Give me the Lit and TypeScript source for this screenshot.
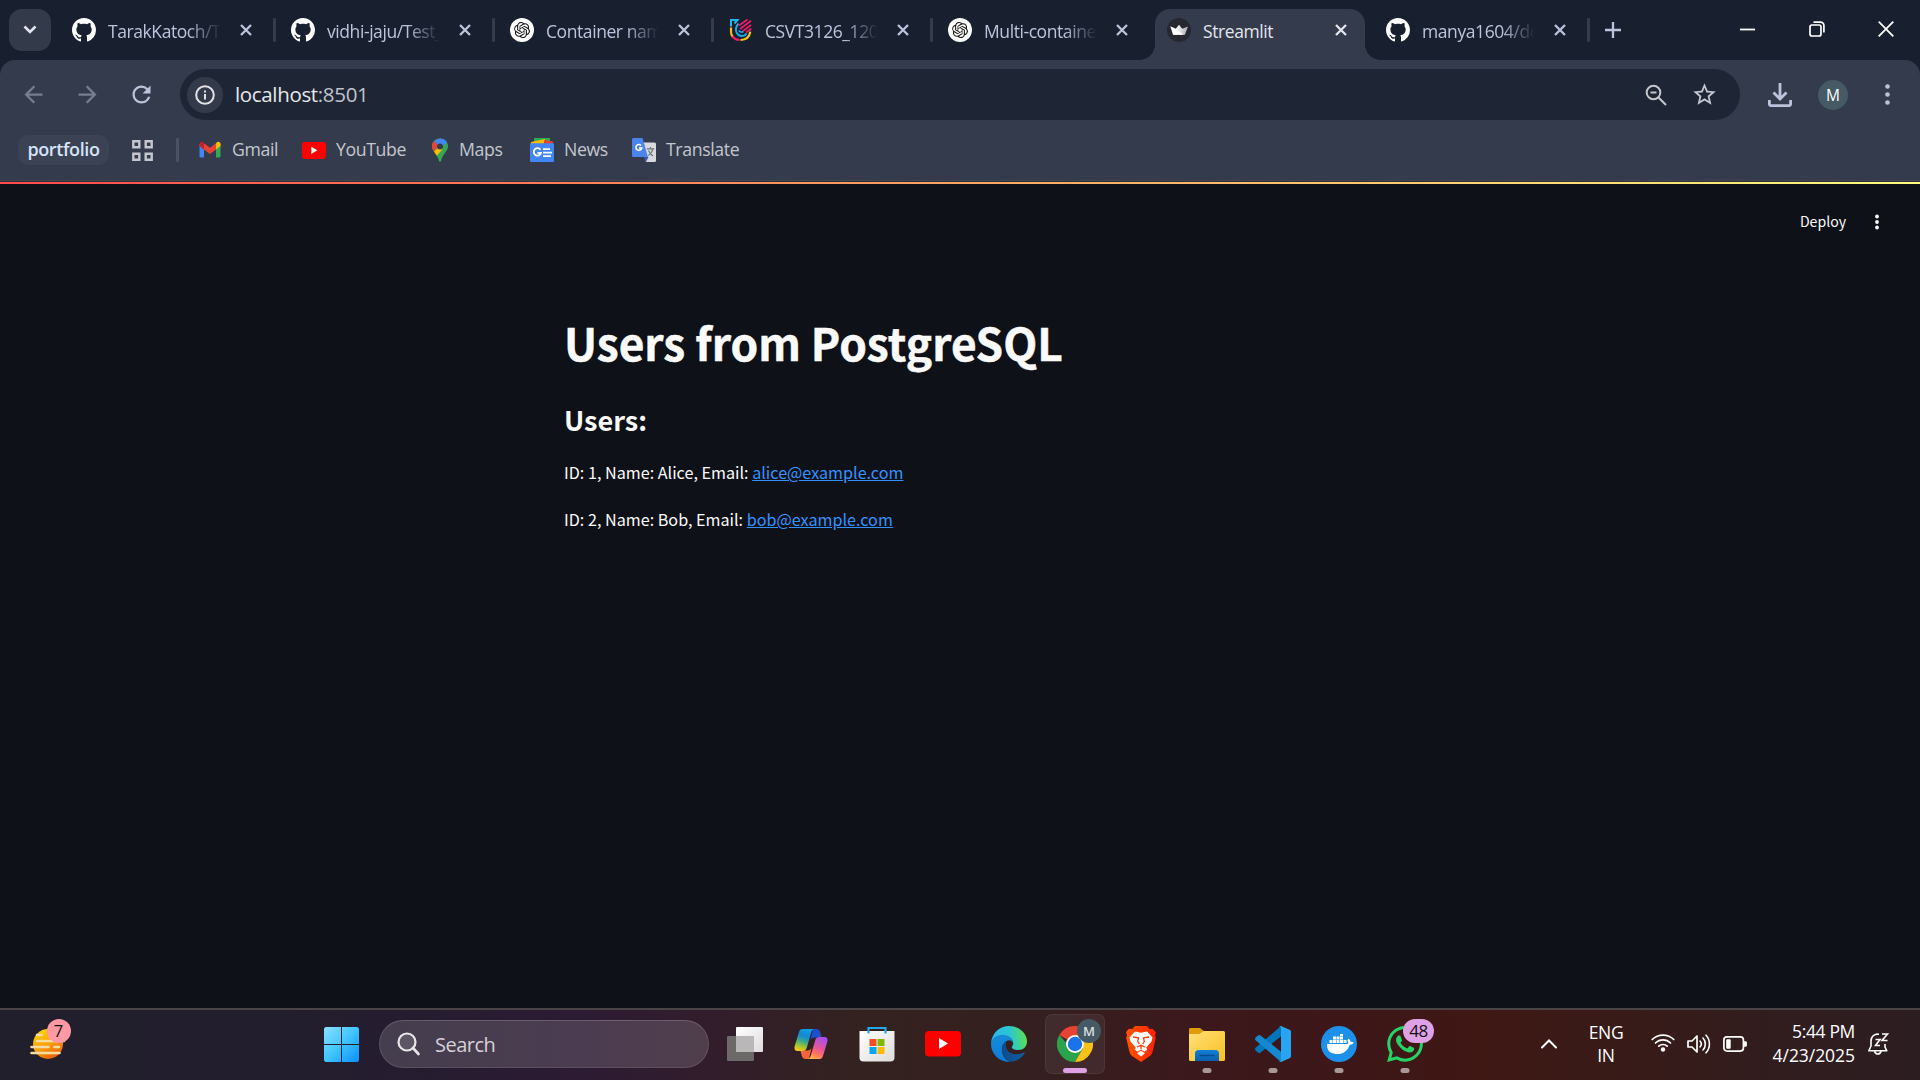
import { LitElement, html, css, svg, nothing } from "lit";
import { customElement, property } from "lit/decorators.js";
import { classMap } from "lit/directives/class-map.js";

const frame = (size: number, box: number, body: unknown, h = size, boxH = box) =>
  html`<svg width=${size} height=${h} viewBox="0 0 ${box} ${boxH}" fill="none">${body}</svg>`;

const github = frame(24, 16, svg`<path fill="#fff" d="M8 0C3.58 0 0 3.58 0 8c0 3.54 2.29 6.53 5.47 7.59.4.07.55-.17.55-.38 0-.19-.01-.82-.01-1.49-2.01.37-2.53-.49-2.69-.94-.09-.23-.48-.94-.82-1.13-.28-.15-.68-.52-.01-.53.63-.01 1.08.58 1.23.82.72 1.21 1.87.87 2.33.66.07-.52.28-.87.51-1.07-1.78-.2-3.64-.89-3.64-3.95 0-.87.31-1.59.82-2.15-.08-.2-.36-1.02.08-2.12 0 0 .67-.21 2.2.82.64-.18 1.32-.27 2-.27s1.36.09 2 .27c1.53-1.04 2.2-.82 2.2-.82.44 1.1.16 1.92.08 2.12.51.56.82 1.27.82 2.15 0 3.07-1.87 3.75-3.65 3.95.29.25.54.73.54 1.48 0 1.07-.01 1.93-.01 2.2 0 .21.15.46.55.38A8.01 8.01 0 0 0 16 8c0-4.42-3.58-8-8-8z"/>`);

const openai = frame(24, 36, svg`<circle cx="18" cy="18" r="18" fill="#fff"/><g transform="translate(6 6)"><path fill="#111" d="M22.2819 9.8211a5.9847 5.9847 0 0 0-.5157-4.9108 6.0462 6.0462 0 0 0-6.5098-2.9A6.0651 6.0651 0 0 0 4.9807 4.1818a5.9847 5.9847 0 0 0-3.9977 2.9 6.0462 6.0462 0 0 0 .7427 7.0966 5.98 5.98 0 0 0 .511 4.9107 6.051 6.051 0 0 0 6.5146 2.9001A5.9847 5.9847 0 0 0 13.2599 24a6.0557 6.0557 0 0 0 5.7718-4.2058 5.9894 5.9894 0 0 0 3.9977-2.9001 6.0557 6.0557 0 0 0-.7475-7.0729zm-9.022 12.6081a4.4755 4.4755 0 0 1-2.8764-1.0408l.1419-.0804 4.7783-2.7582a.7948.7948 0 0 0 .3927-.6813v-6.7369l2.02 1.1686a.071.071 0 0 1 .038.052v5.5826a4.504 4.504 0 0 1-4.4945 4.4944zm-9.6607-4.1254a4.4708 4.4708 0 0 1-.5346-3.0137l.142.0852 4.783 2.7582a.7712.7712 0 0 0 .7806 0l5.8428-3.3685v2.3324a.0804.0804 0 0 1-.0332.0615L9.74 19.9502a4.4992 4.4992 0 0 1-6.1408-1.6464zM2.3408 7.8956a4.485 4.485 0 0 1 2.3655-1.9728V11.6a.7664.7664 0 0 0 .3879.6765l5.8144 3.3543-2.0201 1.1685a.0757.0757 0 0 1-.071 0l-4.8303-2.7865A4.504 4.504 0 0 1 2.3408 7.872zm16.5963 3.8558L13.1038 8.364 15.1192 7.2a.0757.0757 0 0 1 .071 0l4.8303 2.7913a4.4944 4.4944 0 0 1-.6765 8.1042v-5.6772a.79.79 0 0 0-.407-.667zm2.0107-3.0231l-.142-.0852-4.7735-2.7818a.7759.7759 0 0 0-.7854 0L9.409 9.2297V6.8974a.0662.0662 0 0 1 .0284-.0615l4.8303-2.7866a4.4992 4.4992 0 0 1 6.6802 4.66zM8.3065 12.863l-2.02-1.1638a.0804.0804 0 0 1-.038-.0567V6.0742a4.4992 4.4992 0 0 1 7.3757-3.4537l-.142.0805L8.704 5.459a.7948.7948 0 0 0-.3927.6813zm1.0976-2.3654l2.602-1.4998 2.6069 1.4998v2.9994l-2.5974 1.4997-2.6067-1.4997Z"/></g>`);

const shield = frame(24, 24, svg`
  <path d="M2 8.500V2h6.500L5.500 5.500" stroke="#1fb6e8" stroke-width="2"/>
  <path d="M2 9.500v4.500c0 2 .7 3.600 1.800 4.900" stroke="#f9b916" stroke-width="2.200"/>
  <path d="M3.600 18.300c1.600 2.400 3.900 3.500 6.900 3.700" stroke="#ec1d64" stroke-width="2.200"/>
  <path d="M11.500 22c5-.2 9-3.200 9.800-8.400" stroke="#f9c916" stroke-width="2.200"/>
  <path d="M9.500 5.500C6.800 8.500 6.300 12 7.800 15c1 1.900 3 3 5 3 2 0 3.800-1 4.700-2.500" stroke="#1fa6e8" stroke-width="1.900"/>
  <path d="M9.800 12.500C11.300 14.300 13 14.300 14.500 13.500" stroke="#1fa6e8" stroke-width="1.700"/>
  <path d="M10 7.500 18.500 1.500M11 11l11-8.300M14 13l8-6M17 14.500l5.300-3.700" stroke="#ec1d64" stroke-width="1.700"/>`);

const crown = frame(24, 24, svg`
  <defs><linearGradient id="cr" x1="0" y1="0" x2="1" y2="0"><stop offset=".3" stop-color="#fff"/><stop offset=".7" stop-color="#d0d0d4"/><stop offset="1" stop-color="#a8a8ae"/></linearGradient></defs>
  <circle cx="12" cy="12" r="12" fill="#262730"/>
  <path d="M3.300 8.300 8.800 10.800 12 6.800l3.300 4 5.700-2.300-3.100 8.200H6z" fill="url(#cr)"/><path d="m6 16.700 4-4.400 6.500 4.400z" fill="#fff"/>`);

const cross = frame(12, 12, svg`<path d="m1 1 10 10M11 1 1 11" stroke="currentColor" stroke-width="2.300"/>`);

type TabInfo = { icon: unknown; title: string; active?: boolean; bare?: boolean };
const tabs: TabInfo[] = [
  { icon: github, title: "TarakKatoch/Te" },
  { icon: github, title: "vidhi-jaju/Test_" },
  { icon: openai, title: "Container nam" },
  { icon: shield, title: "CSVT3126_120" },
  { icon: openai, title: "Multi-containe", bare: true },
  { icon: crown, title: "Streamlit", active: true, bare: true },
  { icon: github, title: "manya1604/do" },
];

const youtube = (w: number, h: number) => frame(w, 36, svg`<rect width="36" height="25.500" rx="4" fill="#f00"/><path d="M14 7v11l9-5.500z" fill="#fff"/>`, h, 25.5);

const gmail = frame(24, 24, svg`
  <path d="M1.500 6v12.300c0 .7.500 1.200 1.200 1.200H6V9z" fill="#4285f4"/><path d="M18 9v10.500h3.300c.7 0 1.200-.5 1.200-1.200V6z" fill="#34a853"/>
  <path d="M18 5.300v6.200l4.500-3.400V6c0-2.200-2.200-2.900-3.700-1.800z" fill="#fbbc04"/><path d="M6 11.500V5.300l6 4.500 6-4.500v6.200L12 16z" fill="#ea4335"/>
  <path d="M1.500 6v2.100L6 11.500V5.300l-.8-.8C3.700 3.200 1.500 4 1.500 6z" fill="#c5221f"/>`);

const maps = frame(18, 18, svg`
  <defs><clipPath id="pin"><path d="M9 .5C4.500.5 1 3.800 1 8.200 1 13 5.500 15 7.600 21.500 8 23 8.300 24 9 24s1-1 1.400-2.500C12.500 15 17 13 17 8.200 17 3.800 13.500.5 9 .5z"/></clipPath></defs>
  <g clip-path="url(#pin)"><path d="M0 0h18v24H0z" fill="#34a853"/><path d="M2 14.500 9 8l2.500 3.200L5.500 18H0v-8z" fill="#fbbc04"/><path d="M3 3.500 8 0h6l2.500 4L9 10.500z" fill="#4285f4"/><path d="m3 3.200 5 4.300-5.500 6.300H0V4z" fill="#ea4335"/></g>
  <circle cx="9" cy="8.400" r="3" fill="#343b4c"/>`, 24, 24);

const news = frame(24, 24, svg`
  <path d="M4 0h16v6H4z" fill="#34a853"/><path d="m1 4 14-3v5H1z" fill="#fbbc04"/><path d="m14 2 9 1.500V6h-9z" fill="#ea4335"/>
  <rect y="5.300" width="24" height="18.700" rx="1" fill="#4285f4"/><path d="M10.500 11.800A3.700 3.700 0 1 0 11 15H7.500" stroke="#fff" stroke-width="1.800"/><path d="M13 11.200h7M13 14.700h9M13 18.200h8" stroke="#fff" stroke-width="1.800"/>`);

const translate = frame(24, 24, svg`
  <path d="M9 4.500h13.500A1.500 1.500 0 0 1 24 6v16.500a1.500 1.500 0 0 1-1.500 1.500H14z" fill="#d8dadd"/><path d="M12.500 19h4l-2.500 5z" fill="#3c50d0"/>
  <path d="M1.500 0h9l5.500 19H1.500A1.500 1.500 0 0 1 0 17.500v-16A1.500 1.500 0 0 1 1.500 0z" fill="#4c84ee"/>
  <path d="M9 7.500A2.900 2.900 0 1 0 9.700 10H7" stroke="#fff" stroke-width="1.600"/><path d="M14.800 10.800h7.500M18.500 9v2M20.800 11c-.6 3-2.500 5.300-4.500 6.500M16.500 12.500c1 2.500 2.500 4 4.500 5.500" stroke="#70777d" stroke-width="1.200"/>`);

const weather = frame(36, 36, svg`
  <defs><linearGradient id="sun" x1=".2" y1="0" x2=".7" y2="1"><stop stop-color="#ffd400"/><stop offset=".55" stop-color="#f99d0a"/><stop offset="1" stop-color="#e8590c"/></linearGradient></defs>
  <circle cx="18" cy="18" r="15" fill="url(#sun)"/>
  <path d="M7 9h5M7 15h27M1.500 21h17M24.500 21h4.500M1.500 27h28" stroke="#f5dca0" stroke-width="2.600" stroke-linecap="round"/>`);

const windows = frame(35, 35, svg`
  <defs><linearGradient id="wn" x1="0" y1="0" x2="35" y2="35" gradientUnits="userSpaceOnUse"><stop stop-color="#8ae1ff"/><stop offset=".5" stop-color="#40c4ff"/><stop offset="1" stop-color="#0a90ff"/></linearGradient></defs>
  <path fill="url(#wn)" d="M1.500 0H17v17H0V1.500zM18 0h15.500L35 1.500V17H18zM0 18h17v17H1.500L0 33.500zM18 18h17v15.500L33.500 35H18z"/>`);

const taskView = frame(36, 36, svg`
  <defs><linearGradient id="tv" x1="0" y1="0" x2="1" y2="1"><stop stop-color="#fff"/><stop offset="1" stop-color="#ddd"/></linearGradient></defs>
  <rect x="9" y="1" width="27" height="25" rx="1" fill="url(#tv)"/><rect y="10" width="27" height="25" rx="1" fill="#6c6a69"/><path d="M9 10h18v16H9z" fill="#b9b7b7"/>`);

const copilot = frame(36, 36, svg`
  <defs>
    <linearGradient id="c1" x1=".6" y1="0" x2=".3" y2="1"><stop stop-color="#159ce4"/><stop offset=".3" stop-color="#1387d8"/><stop offset=".55" stop-color="#37a98c"/><stop offset=".8" stop-color="#a4c533"/><stop offset="1" stop-color="#f9c915"/></linearGradient>
    <linearGradient id="c2" x1=".7" y1="0" x2=".3" y2="1"><stop stop-color="#a54ff0"/><stop offset=".45" stop-color="#e0559f"/><stop offset=".75" stop-color="#fb7164"/><stop offset="1" stop-color="#ffaf45"/></linearGradient>
  </defs>
  <path d="M20 3h3.500c2 0 3 1 3.600 3l1.600 5.500H22c-2.500 0-4 1-4.600 3z" fill="#1c4fcb"/>
  <path d="M16 33h-3.500c-2 0-3-1-3.600-3l-1.600-5.500H14c2.500 0 4-1 4.600-3z" fill="#f6643c"/>
  <path d="M9.500 3H21c-1.500.5-2.300 1.800-2.800 3.500L13.700 22c-.6 2-2 3-4 3H4.500C2 25 1 23 1.600 20.500L6 6c.6-2 1.700-3 3.500-3z" fill="url(#c1)"/>
  <path d="M26.500 33H15c1.500-.5 2.300-1.800 2.800-3.500L22.300 14c.6-2 2-3 4-3h5.200c2.500 0 3.500 2 2.900 4.500L30 30c-.6 2-1.700 3-3.500 3z" fill="url(#c2)"/>`);

const store = frame(36, 36, svg`
  <defs><linearGradient id="st" x1="0" y1="0" x2="1" y2="1"><stop stop-color="#fff"/><stop offset="1" stop-color="#dcdcdc"/></linearGradient></defs>
  <path d="M.5 5h35v26.500a4 4 0 0 1-4 4h-27a4 4 0 0 1-4-4z" fill="url(#st)"/><path d="M9.500 7.500v-5.500h17v5.500" stroke="#23a6ea" stroke-width="2.200"/>
  <path d="M10.500 13h7v7h-7z" fill="#f04e23"/><path d="M18.500 13h7v7h-7z" fill="#7fba00"/><path d="M10.500 21h7v7h-7z" fill="#05a6f0"/><path d="M18.500 21h7v7h-7z" fill="#ffba08"/>`);

const edge = frame(36, 36, svg`
  <defs>
    <linearGradient id="e1" x1="0" y1=".5" x2="1" y2=".4"><stop stop-color="#29b8ee"/><stop offset=".55" stop-color="#2bc7cf"/><stop offset="1" stop-color="#5fe04b"/></linearGradient>
    <linearGradient id="e2" x1=".3" y1="0" x2=".4" y2="1"><stop stop-color="#168dd6"/><stop offset="1" stop-color="#0c7ad8"/></linearGradient>
    <linearGradient id="e3" x1="0" y1="0" x2="1" y2="0"><stop stop-color="#114a8b"/><stop offset="1" stop-color="#0c5da5"/></linearGradient>
  </defs>
  <path d="M0 17C1 7 8.500 0 18 0c10.500 0 18 7.500 18 15.500 0 5-3.700 8.500-8.700 8.500-3.800 0-6.500-1.400-6.500-2.800 0-1 1.400-1.700 1.400-4C22.200 13 18 9.500 12 9.500 6 9.500 1.500 12.500 0 17z" fill="url(#e1)"/>
  <path d="M0 18c.3-5.500 5.500-9.200 11.500-9.200 6 0 10.700 3.700 10.700 8.200-1.200-2-2.700-2.800-4.700-2.600-4 .6-7 5-6.500 10.600.5 5 3.500 9 8 10.900C9 36.500 0 28.500 0 18z" fill="url(#e2)"/>
  <path d="M15 15.500c-3.500 2-5 6-3.800 10.500C12.600 32 17 36 21.500 35.600c5.500-1 9.700-4.300 12.200-8.300.3-.7-.2-1-.8-.7-8 3.800-17 1-17.900-6.200-.2-1.900 0-3.500 0-4.900z" fill="url(#e3)"/>`);

const chrome = frame(36, 36, svg`
  <path d="M18 18 2.410 9A18 18 0 0 1 33.590 9H18z" fill="#e94235"/><path d="M18 18h-7.800L2.410 9A18 18 0 0 0 18 36l7.800-13.500z" fill="#2ba24c"/>
  <path d="M18 9h15.590A18 18 0 0 1 18 36l7.800-13.500z" fill="#fbc116"/><circle cx="18" cy="18" r="9" fill="#fff"/><circle cx="18" cy="18" r="7.200" fill="#1a73e8"/>`);

const brave = frame(30, 30, svg`
  <defs><linearGradient id="br" x1="0" y1="0" x2="1" y2="0"><stop stop-color="#ff5500"/><stop offset="1" stop-color="#ff2000"/></linearGradient></defs>
  <path d="m9 0h12l2.700 3 2.600-.3L30 6.200l-1 3 .8 2.500L26.500 26c-.5 2-1.500 3.300-3 4.300L15 36l-8.500-5.700c-1.500-1-2.500-2.300-3-4.300L.2 11.700 1 9.200l-1-3 2.700-3.500L6.300 3z" fill="url(#br)"/>
  <path d="m9 5.500 6 1.300 6-1.300 5.500 6-1 4-5.200 6 .9 2.300-2.700 2L15 23.500l-3.500 2.300-2.700-2 .9-2.300-5.200-6-1-4z" fill="#fff"/>
  <path d="M15 24.800 19 27.300 15 30.500l-4-3.200z" fill="#fff"/>
  <path d="m7 11 5.500.8-.8 3.700 1.600 2.500M23 11l-5.500.8.8 3.700-1.600 2.500M11 21l4-1.800 4 1.800M15 19v4" stroke="#ff3a08" stroke-width="1.300"/>`, 36, 36);

const folder = frame(36, 36, svg`
  <defs><linearGradient id="fd" x1="0" y1="0" x2="1" y2="1"><stop stop-color="#ffe07c"/><stop offset="1" stop-color="#fbbf1d"/></linearGradient><linearGradient id="fb" x1="0" y1="0" x2="0" y2="1"><stop stop-color="#1280d6"/><stop offset="1" stop-color="#0a5fb0"/></linearGradient></defs>
  <path d="M0 3.500C0 2.500.8 2 1.800 2H11l5 4v4H0z" fill="#e09d05"/><path d="M0 8h10.500l4-3H34.500A1.500 1.500 0 0 1 36 6.500v27a1.500 1.500 0 0 1-1.500 1.500h-33A1.500 1.500 0 0 1 0 33.500z" fill="url(#fd)"/>
  <path d="M6 35v-7.500a3.500 3.500 0 0 1 3.500-3.500h17a3.500 3.500 0 0 1 3.500 3.500V35z" fill="url(#fb)"/><path d="M11 29.500h14" stroke="#084a8c" stroke-width="1.400" stroke-linecap="round"/>`);

const vscode = frame(36, 36, svg`
  <path d="M26 0v10.300L5.500 26.600c-.8.700-1.800.7-2.600 0L.6 24.400c-.8-.8-.8-1.900 0-2.700z" fill="#0076bd"/>
  <path d="M26 36V25.700L5.500 9.400c-.8-.7-1.800-.7-2.600 0L.6 11.600c-.8.800-.8 1.900 0 2.700z" fill="#1489d2"/>
  <path d="M26 0l8.600 3.700c.9.400 1.400 1.200 1.400 2.200v24.200c0 1-.5 1.800-1.400 2.200L26 36c-.8.200-1.500 0-2-.6 1 .4 2-.3 2-1.500V2.100c0-1.200-1-1.900-2-1.500.5-.6 1.200-.8 2-.6z" fill="#27a4f2"/>`);

const docker = frame(36, 36, svg`
  <circle cx="18" cy="18" r="18" fill="#1d91ea"/>
  <path d="M6 18h20.500c.8-.3 1-1 .5-2-.6-1.200-.4-2.300.4-3.300 1.300.7 2 1.700 2 3 1.200-.2 2.300 0 3.300.8-.7 1.600-2 2.200-4 2.200C26.900 24.500 22.500 28 16 28c-6 0-10.300-3-10-10z" fill="#fff"/>
  <path d="M8.500 14h3v3h-3zM12 14h3v3h-3zM15.500 14h3v3h-3zM19 14h3v3h-3zM22.500 14h3v3h-3zM12 10.500h3v3h-3zM15.500 10.500h3v3h-3zM19 10.500h3v3h-3zM19 8h3v2h-3z" fill="#fff"/>`);

const whatsapp = frame(36, 24, svg`<path fill="#25d366" d="M17.472 14.382c-.297-.149-1.758-.867-2.03-.967-.273-.099-.471-.148-.67.15-.197.297-.767.966-.94 1.164-.173.199-.347.223-.644.075-.297-.15-1.255-.463-2.39-1.475-.883-.788-1.48-1.761-1.653-2.059-.173-.297-.018-.458.13-.606.134-.133.298-.347.446-.52.149-.174.198-.298.298-.497.099-.198.05-.371-.025-.52-.075-.149-.669-1.612-.916-2.207-.242-.579-.487-.5-.669-.51-.173-.008-.371-.01-.57-.01-.198 0-.52.074-.792.372-.272.297-1.04 1.016-1.04 2.479 0 1.462 1.065 2.875 1.213 3.074.149.198 2.096 3.2 5.077 4.487.709.306 1.262.489 1.694.625.712.227 1.36.195 1.871.118.571-.085 1.758-.719 2.006-1.413.248-.694.248-1.289.173-1.413-.074-.124-.272-.198-.57-.347m-5.421 7.403h-.004a9.87 9.87 0 01-5.031-1.378l-.361-.214-3.741.982.998-3.648-.235-.374a9.86 9.86 0 01-1.51-5.26c.001-5.45 4.436-9.884 9.888-9.884 2.64 0 5.122 1.03 6.988 2.898a9.825 9.825 0 012.893 6.994c-.003 5.45-4.437 9.884-9.885 9.884m8.413-18.297A11.815 11.815 0 0012.05 0C5.495 0 .16 5.335.157 11.892c0 2.096.547 4.142 1.588 5.945L.057 24l6.305-1.654a11.882 11.882 0 005.683 1.448h.005c6.554 0 11.89-5.335 11.893-11.893a11.821 11.821 0 00-3.48-8.413z"/>`);

@customElement("browser-tab")
class BrowserTab extends LitElement {
  @property({ attribute: false }) info!: TabInfo;
  static styles = css`
    :host { display: flex; width: 219px; height: 51px; flex: none; }
    svg { display: block; }
    .tab { box-sizing: border-box; width: 210px; height: 51px; padding: 9px 12px 18px; display: flex; align-items: center; color: #bcc3dc; position: relative; }
    .title { width: 114px; margin-left: 12px; white-space: nowrap; font: 17.5px/26px "Open Sans", "Noto Sans", sans-serif; letter-spacing: -0.42px; padding-top: 1px; mask-image: linear-gradient(90deg, #000 70%, transparent 99%); }
    .close { margin-left: 18px; width: 12px; }
    .active { background: #343b4c; border-radius: 15px 15px 0 0; color: #e3e5ec; }
    .active .title { mask-image: none; width: 130px; }
    .active .close { margin-left: 2px; }
    .active::before, .active::after { content: ""; position: absolute; bottom: 0; width: 15px; height: 15px; }
    .active::before { left: -15px; background: radial-gradient(circle at 0 0, transparent 14.5px, #343b4c 15px); }
    .active::after { right: -15px; background: radial-gradient(circle at 100% 0, transparent 14.5px, #343b4c 15px); }
    .sep { width: 3px; height: 24px; margin: 9px 3px 0; background: #333c4c; border-radius: 1px; }
  `;
  render() {
    const { icon, title, active, bare } = this.info;
    return html`<div class=${classMap({ tab: true, active: !!active })}>${icon}<div class="title">${title}</div><div class="close">${cross}</div></div>
      ${bare ? nothing : html`<div class="sep"></div>`}`;
  }
}

@customElement("task-icon")
class TaskIcon extends LitElement {
  @property({ attribute: false }) icon: unknown;
  @property() state = "";
  @property() badge = "";
  static styles = css`
    :host { display: flex; width: 66px; height: 70px; justify-content: center; align-items: center; flex: none; }
    svg { display: block; }
    .cell { box-sizing: border-box; width: 60px; height: 60px; margin-bottom: 2px; border-radius: 7px; border: 1px solid transparent; position: relative; display: flex; align-items: center; justify-content: center; }
    .active { background: rgba(255, 255, 255, 0.06); border-color: rgba(255, 255, 255, 0.06); }
    .mark { position: absolute; bottom: 0; left: 50%; transform: translateX(-50%); width: 9px; height: 5px; border-radius: 2.500px; background: #a89898; }
    .active .mark { width: 24px; background: #dfa1e6; }
    .badge { position: absolute; height: 24px; top: 4px; border-radius: 12px; display: flex; align-items: center; justify-content: center; font: 17px/24px "Open Sans", sans-serif; }
    .count { left: 27px; width: 31px; background: #dfa1e6; color: #101010; letter-spacing: -0.500px; }
    .person { left: 31px; width: 24px; background: #455a64; color: #d9dfe1; font-size: 13px; font-weight: 600; }
  `;
  render() {
    return html`<div class=${classMap({ cell: true, active: this.state === "active" })}>${this.icon}
      ${this.badge ? html`<div class="badge ${this.state === "active" ? "person" : "count"}">${this.badge}</div>` : nothing}
      ${this.state ? html`<div class="mark"></div>` : nothing}</div>`;
  }
}

@customElement("app-root")
class AppRoot extends LitElement {
  static styles = css`
    :host { display: block; width: 1920px; height: 1080px; overflow: hidden; background: #0e1117; font-family: "Open Sans", "Noto Sans", sans-serif; }
    svg { display: block; flex: none; }
    .page { display: flex; flex-direction: column; height: 1080px; }
    .strip { height: 51px; padding: 9px 0 0 9px; background: #182030; display: flex; flex: none; }
    .menu { width: 42px; height: 42px; border-radius: 13px; background: #333b4b; display: flex; align-items: center; justify-content: center; margin-right: 9px; }
    .new { width: 24px; height: 42px; display: flex; align-items: center; justify-content: center; margin-left: 8px; color: #bcc3dc; }
    .window { margin-left: auto; display: flex; height: 40px; align-items: center; }
    .window > div { width: 69px; display: flex; justify-content: center; }
    .chrome { background: #182030; flex: none; height: 120px; }
    .bars { background: #343b4c; height: 120px; border-radius: 15px 15px 0 0; }
    .tools { display: flex; align-items: center; height: 51px; padding-top: 9px; }
    .nav { width: 54px; display: flex; justify-content: center; color: #777e8f; }
    .nav:first-child { margin-left: 6px; }
    .nav.live { color: #bcc3dc; }
    .address { margin-left: 12px; width: 1560px; height: 51px; border-radius: 25.500px; background: #1e2636; display: flex; align-items: center; box-sizing: border-box; padding: 0 22px 0 7px; }
    .info { width: 36px; height: 36px; border-radius: 50%; background: #333b4b; display: flex; align-items: center; justify-content: center; }
    .url { margin: 0 0 2px 12px; font-size: 20.500px; line-height: 28px; letter-spacing: -0.340px; color: #e6e7ea; flex: 1; }
    .port { color: #c0c3ca; }
    .zoom { margin-right: 24px; }
    .down { margin-left: 28px; }
    .avatar { margin-left: 26px; width: 30px; height: 30px; border-radius: 50%; background: #455a64; color: #fff; font: 500 15.500px/31px "Open Sans", sans-serif; text-align: center; }
    .more { margin-left: 37px; }
    .marks { display: flex; align-items: center; height: 60px; font-size: 17.700px; letter-spacing: -0.380px; color: #c4c7ce; }
    .chip { margin-left: 18px; width: 91px; height: 30px; border-radius: 10px; background: #3b4253; color: #d5e4fb; font-weight: 600; font-size: 18px; line-height: 29px; text-align: center; }
    .apps { margin: 0 23px 0 23px; }
    .rule { width: 3px; height: 24px; background: #4a5263; border-radius: 1px; margin-right: 19px; }
    .mark { display: flex; align-items: center; gap: 10px; line-height: 26px; flex: none; }
    .mark span { margin-bottom: 2px; }
    .edge { height: 1px; background: #42434b; }
    .seam { height: 1px; background: #2b303d; }
    .glow { height: 2px; background: linear-gradient(90deg, #ff4b4b, #fffd80); flex: none; }
    .seams { flex: none; }
    .app { flex: 1; font-family: "Noto Sans CJK SC", sans-serif; color: #fafafa; min-height: 0; }
    .head { display: flex; justify-content: flex-end; align-items: center; height: 76px; padding-right: 38px; font-size: 14.100px; }
    .head span { margin-bottom: 2px; }
    .head svg { margin-left: 26px; }
    .body { padding-left: 564px; }
    h1 { margin: 47px 0 0; font-size: 44.250px; line-height: 70px; font-weight: 700; white-space: nowrap; -webkit-text-stroke: 0.500px #fafafa; }
    h2 { margin: 22px 0 0; font-size: 27.100px; line-height: 42px; font-weight: 700; }
    p { margin: 16px 0 0; font-size: 16.150px; line-height: 31px; }
    a { color: #3391ff; text-decoration: underline; }
    .taskbar { flex: none; height: 70px; border-top: 2px solid #4b4447; display: flex; align-items: center; color: #fff; background: linear-gradient(90deg, #221f2d 0, #221e2d 280px, #261c30 430px, #2d1b33 590px, #321d2b 720px, #33221f 860px, #351f20 1040px, #3c181c 1200px, #3d1718 1350px, #3f1814 1480px, #381b18 1620px, #301d1f 1800px, #2c1d21 1920px); }
    .weather { width: 36px; position: relative; margin: 0 258px 2px 30px; }
    .weather span { position: absolute; left: 16.500px; top: -7px; width: 24px; height: 24px; border-radius: 50%; background: #ff99a4; color: #111; font-size: 16.500px; line-height: 24px; text-align: center; }
    .start { margin-bottom: 1px; }
    .search { margin: 0 3px 2px 20px; width: 330px; height: 48px; box-sizing: border-box; border-radius: 24px; background: rgba(255, 255, 255, 0.15); border: 1px solid rgba(255, 255, 255, 0.1); border-top-color: rgba(255, 255, 255, 0.16); display: flex; align-items: center; padding-left: 17px; gap: 14px; font-size: 20px; letter-spacing: -0.500px; color: #d6d1d8; }
    .tray { margin-left: auto; display: flex; align-items: center; font-size: 17.500px; line-height: 24px; height: 68px; margin-bottom: 2px; }
    .lang { margin: 0 27px 0 31px; width: 36px; text-align: center; letter-spacing: -0.350px; line-height: 23px; white-space: nowrap; }
    .status { display: flex; gap: 12px; align-items: center; }
    .clock { text-align: right; width: 100px; margin: 0 12px 2px 8px; letter-spacing: -0.050px; white-space: nowrap; }
    .clock span { letter-spacing: -0.350px; }
    .bell { margin-right: 30px; }
  `;

  render() {
    const apps: [unknown, string, string][] = [
      [taskView, "", ""], [copilot, "", ""], [store, "", ""], [youtube(36, 25.5), "", ""], [edge, "", ""], [chrome, "active", "M"],
      [brave, "", ""], [folder, "open", ""], [vscode, "open", ""], [docker, "open", ""], [whatsapp, "open", "48"],
    ];
    const marks: [unknown, string, number][] = [[gmail, "Gmail", 104], [youtube(24, 17), "YouTube", 129], [maps, "Maps", 99], [news, "News", 102], [translate, "Translate", 110]];
    const users = [{ id: 1, name: "Alice", email: "alice@example.com" }, { id: 2, name: "Bob", email: "bob@example.com" }];
    return html`<div class="page">
      <div class="strip">
        <div class="menu">${frame(14, 14, svg`<path d="m1.500 3.500 5.500 5.500 5.500-5.500" stroke="#e3e6ee" stroke-width="2.600"/>`)}</div>
        ${tabs.map((t) => html`<browser-tab .info=${t}></browser-tab>`)}
        <div class="new">${frame(16, 16, svg`<path d="M8 0v16M0 8h16" stroke="currentColor" stroke-width="2.300"/>`)}</div>
        <div class="window">
          <div>${frame(15, 15, svg`<path d="M0 7.500h15" stroke="#fff" stroke-width="1.800"/>`)}</div>
          <div>${frame(16, 16, svg`<rect x="1" y="4" width="11" height="11" rx="2" stroke="#fff" stroke-width="1.700"/><path d="M4.500 1.200h7a3.400 3.400 0 0 1 3.400 3.400v7" stroke="#fff" stroke-width="1.700"/>`)}</div>
          <div>${frame(16, 16, svg`<path d="m.7.7 14.600 14.600M15.300.7.7 15.300" stroke="#fff" stroke-width="1.800"/>`)}</div>
        </div>
      </div>
      <div class="chrome"><div class="bars">
        <div class="tools">
          <div class="nav">${frame(27, 24, svg`<path fill="currentColor" d="M20 11H7.830l5.590-5.590L12 4l-8 8 8 8 1.410-1.410L7.830 13H20v-2z"/>`)}</div>
          <div class="nav">${frame(27, 24, svg`<path fill="currentColor" d="M4 11h12.170l-5.590-5.590L12 4l8 8-8 8-1.410-1.410L16.170 13H4v-2z"/>`)}</div>
          <div class="nav live">${frame(27, 24, svg`<path fill="currentColor" d="M17.650 6.350A7.958 7.958 0 0 0 12 4c-4.420 0-7.990 3.580-7.990 8s3.570 8 7.990 8c3.730 0 6.840-2.550 7.730-6h-2.080A5.990 5.990 0 0 1 12 18c-3.310 0-6-2.690-6-6s2.690-6 6-6c1.660 0 3.140.69 4.220 1.780L13 11h7V4l-2.350 2.350z"/>`)}</div>
          <div class="address">
            <div class="info">${frame(20, 20, svg`<circle cx="10" cy="10" r="8.800" stroke="#e3e3e3" stroke-width="2"/><path d="M10 9v5.500M10 5.400v2" stroke="#e3e3e3" stroke-width="2"/>`)}</div>
            <div class="url">localhost<span class="port">:8501</span></div>
            <div class="zoom">${frame(22, 22, svg`<circle cx="8.500" cy="8.500" r="6.800" stroke="#c4c6cb" stroke-width="2"/><path d="m13.500 13.500 7.500 7.500M5.500 8.500h6" stroke="#c4c6cb" stroke-width="2"/>`)}</div>
            ${frame(27, 24, svg`<path fill="#c4c6cb" d="m22 9.240-7.190-.62L12 2 9.190 8.630 2 9.240l5.460 4.730L5.820 21 12 17.270 18.180 21l-1.630-7.030L22 9.240zM12 15.400l-3.760 2.270 1-4.280-3.320-2.880 4.380-.38L12 6.100l1.710 4.040 4.380.38-3.320 2.880 1 4.280L12 15.400z"/>`)}
          </div>
          <div class="down">${frame(24, 24, svg`<path d="M12 0v15M5.500 9.500 12 16l6.500-6.500" stroke="#bcc3dc" stroke-width="2.800"/><path d="M1.400 17v4.500a1.200 1.200 0 0 0 1.200 1.100h18.800a1.200 1.200 0 0 0 1.200-1.100V17" stroke="#bcc3dc" stroke-width="2.800"/>`)}</div>
          <div class="avatar">M</div>
          <div class="more">${frame(5, 5, svg`<circle cx="2.500" cy="2.500" r="2.300" fill="#bcc3dc"/><circle cx="2.500" cy="10.500" r="2.300" fill="#bcc3dc"/><circle cx="2.500" cy="18.500" r="2.300" fill="#bcc3dc"/>`, 21, 21)}</div>
        </div>
        <div class="marks">
          <div class="chip">portfolio</div>
          <div class="apps">${frame(21, 21, svg`<path d="M1.300 1.300h6v6h-6zM13.700 1.300h6v6h-6zM1.300 13.700h6v6h-6zM13.700 13.700h6v6h-6z" stroke="#c4c7ce" stroke-width="2.400"/>`)}</div>
          <div class="rule"></div>
          ${marks.map(([icon, name, width]) => html`<div class="mark" style="width:${width}px">${icon}<span>${name}</span></div>`)}
        </div>
      </div></div>
      <div class="seams"><div class="edge"></div><div class="seam"></div></div>
      <div class="glow"></div>
      <div class="app">
        <div class="head"><span>Deploy</span> ${frame(10, 10, svg`<circle cx="5" cy="2.500" r="1.900" fill="#fafafa"/><circle cx="5" cy="8" r="1.900" fill="#fafafa"/><circle cx="5" cy="13.500" r="1.900" fill="#fafafa"/>`, 16, 16)}</div>
        <div class="body">
          <h1>Users from PostgreSQL</h1>
          <h2>Users:</h2>
          ${users.map((u) => html`<p>ID: ${u.id}, Name: ${u.name}, Email: <a>${u.email}</a></p>`)}
        </div>
      </div>
      <div class="taskbar">
        <div class="weather">${weather}<span>7</span></div>
        <div class="start">${windows}</div>
        <div class="search">${frame(24, 24, svg`<circle cx="10" cy="10" r="8.500" fill="#ffffff20" stroke="#e8e6ea" stroke-width="2.200"/><path d="m16 16 5.500 6" stroke="#e8e6ea" stroke-width="2.600" stroke-linecap="round"/>`)}<span>Search</span></div>
        ${apps.map(([icon, state, badge]) => html`<task-icon .icon=${icon} .state=${state} .badge=${badge}></task-icon>`)}
        <div class="tray">
          ${frame(16, 16, svg`<path d="m1 8.500 7-7 7 7" stroke="#fff" stroke-width="2" stroke-linecap="round"/>`, 10, 10)}
          <div class="lang">ENG<br />IN</div>
          <div class="status">
            ${frame(24, 24, svg`<path d="M1.200 7.500a15.300 15.300 0 0 1 21.600 0M4.500 11a10.600 10.600 0 0 1 15 0M7.800 14.200a6 6 0 0 1 8.400 0" stroke="#fff" stroke-width="1.700" stroke-linecap="round"/><circle cx="12" cy="17.500" r="2.200" fill="#fff"/>`)}
            ${frame(24, 24, svg`<path d="M1 9h4l5-5v16l-5-5H1z" stroke="#fff" stroke-width="1.700" stroke-linejoin="round"/><path d="M13 9a4.500 4.500 0 0 1 0 6M16 6a9 9 0 0 1 0 12M19 3.200a13 13 0 0 1 0 17.600" stroke="#fff" stroke-width="1.600" stroke-linecap="round"/>`)}
            ${frame(24, 24, svg`<rect x=".9" y="4.900" width="19.500" height="14.200" rx="3" stroke="#fff" stroke-width="1.700"/><rect x="3.200" y="7.300" width="4.500" height="9.400" rx="1" fill="#fff"/><path d="M21 9.200h1.500a1.400 1.400 0 0 1 1.400 1.400v2.800a1.400 1.400 0 0 1-1.400 1.400H21z" fill="#fff"/>`)}
          </div>
          <div class="clock"><span>5:44 PM</span><br />4/23/2025</div>
          <div class="bell">${frame(23, 23, svg`<path d="M12 2.200C7.500 1.500 4 4.500 4 9v5l-2.200 4.800h18L18 15v-3" stroke="#fff" stroke-width="1.600" stroke-linejoin="round"/><path d="M7.500 19c.5 2 1.700 3 3.300 3s2.800-1 3.300-3" stroke="#fff" stroke-width="1.600"/><path d="M8.500 7.500h4.500l-4.500 6h4.500M15 2h5.500L15 8.500h5.500" stroke="#fff" stroke-width="1.600"/>`, 24, 24)}</div>
        </div>
      </div>
    </div>`;
  }
}
